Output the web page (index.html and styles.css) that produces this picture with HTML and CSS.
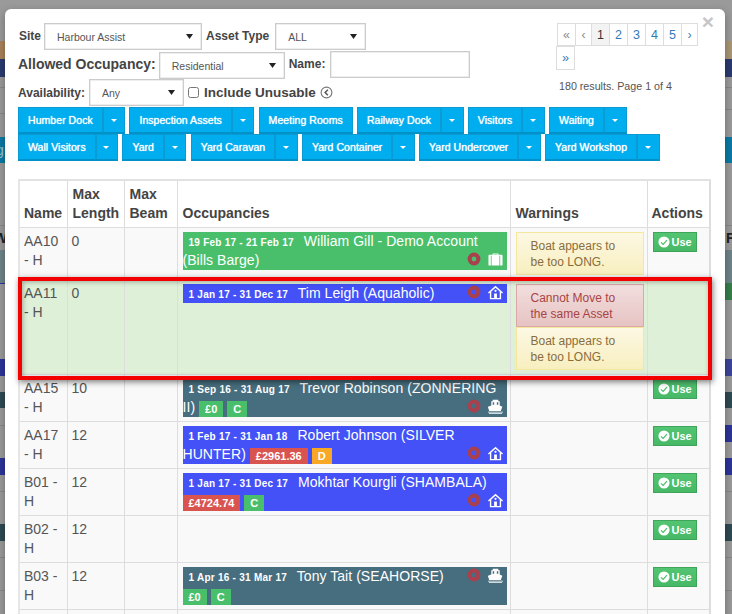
FILE: index.html
```html
<!DOCTYPE html>
<html lang="en">
<head>
<meta charset="utf-8">
<title>Move Asset</title>
<link rel="stylesheet" href="styles.css">
</head>
<body>
<svg class="defs" width="0" height="0" aria-hidden="true">
  <symbol id="i-ring" viewBox="0 0 14 14"><circle cx="7" cy="7" r="4.400" fill="none" stroke="#a8404e" stroke-width="4"/></symbol>
  <symbol id="i-case" viewBox="0 0 16 16"><path fill="#fff" d="M5 3V1.500h6V3h3.500c.6 0 1 .4 1 1v9.500c0 .6-.4 1-1 1h-13c-.6 0-1-.4-1-1V4c0-.6.4-1 1-1zM6.200 3h3.600V2.500H6.200zM3 4v10.500h.8V4zM12.200 4v10.500h.8V4z" fill-rule="evenodd"/></symbol>
  <symbol id="i-house" viewBox="0 0 16 16"><path fill="#fff" fill-rule="evenodd" d="M8 .8 16 8l-.9 1L14 8v7.200H2V8L.9 9 0 8zM8 2.800 3.500 7v6.800h3V9h3v4.800h3V7zM8 5a1.200 1.200 0 1 1 0 2.400A1.200 1.200 0 0 1 8 5z"/></symbol>
  <symbol id="i-boat" viewBox="0 0 16 16"><path fill="#fff" fill-rule="evenodd" d="M5 .8h6v1.500h1.500V7l2.800 1.300-1.700 4.500H1.400L-.3 8.300 3.500 7V2.300H5zM5 3.500v2.700h1.600V3.500zm4.400 0v2.700H11V3.500z"/><path fill="#fff" d="M0 13.500h16v1H0zM1 15.200h14v.8H1z"/></symbol>
  <symbol id="i-check" viewBox="0 0 14 14"><path fill="#fff" fill-rule="evenodd" d="M7 .5a6.500 6.500 0 1 1 0 13 6.500 6.500 0 0 1 0-13zM3.700 7 3 7.900l3 2.800 5-5.400-1-.9-4 4.300z"/></symbol>
  <symbol id="i-back" viewBox="0 0 14 14"><circle cx="7" cy="7" r="5.800" fill="none" stroke="#777" stroke-width="1.200"/><path fill="none" stroke="#555" stroke-width="1.600" d="M8.500 4 5.500 7l3 3"/></symbol>
</svg>
<div class="screen">
  <div class="backdrop">
    <div class="strip strip-left"><span class="bg-text bt-g">g</span><span class="bg-text bt-w">W</span></div>
    <div class="strip strip-right"><span class="bg-text bt-fr">Fr</span></div>
  </div>
  <div class="modal">
    <span class="close">×</span>
    <div class="top">
      <div class="filters">
        <div class="frow frow-1">
          <label class="lbl">Site</label>
          <select class="sel sel-site"><option>Harbour Assist</option></select>
          <label class="lbl">Asset Type</label>
          <select class="sel sel-type"><option>ALL</option></select>
        </div>
        <div class="frow frow-2">
          <label class="lbl lbl-big">Allowed Occupancy:</label>
          <select class="sel sel-occ"><option>Residential</option></select>
          <label class="lbl">Name:</label>
          <input class="name-input" type="text">
        </div>
        <div class="frow frow-3">
          <label class="lbl lbl-avail">Availability:</label>
          <select class="sel sel-avail"><option>Any</option></select>
          <input class="chk" type="checkbox">
          <label class="lbl lbl-unusable">Include Unusable</label>
          <svg class="ico-back"><use href="#i-back"/></svg>
        </div>
      </div>
      <div class="pager-box">
        <ul class="pager">
          <li class="muted">«</li><li class="muted sm">‹</li><li class="active">1</li><li>2</li><li>3</li><li>4</li><li>5</li><li class="sm">›</li>
          <li class="wrap-last">»</li>
        </ul>
        <p class="results">180 results. Page 1 of 4</p>
      </div>
    </div>
    <div class="btn-row">
      <div class="split"><span class="b">Humber Dock</span><span class="c"></span></div>
      <div class="split"><span class="b">Inspection Assets</span><span class="c"></span></div>
      <div class="split"><span class="b">Meeting Rooms</span></div>
      <div class="split"><span class="b">Railway Dock</span><span class="c"></span></div>
      <div class="split"><span class="b">Visitors</span><span class="c"></span></div>
      <div class="split"><span class="b">Waiting</span><span class="c"></span></div>
    </div>
    <div class="btn-row">
      <div class="split"><span class="b">Wall Visitors</span><span class="c"></span></div>
      <div class="split"><span class="b">Yard</span><span class="c"></span></div>
      <div class="split"><span class="b">Yard Caravan</span><span class="c"></span></div>
      <div class="split"><span class="b">Yard Container</span><span class="c"></span></div>
      <div class="split"><span class="b">Yard Undercover</span><span class="c"></span></div>
      <div class="split"><span class="b">Yard Workshop</span><span class="c"></span></div>
    </div>
    <div class="table-wrap">
      <table class="assets">
        <colgroup><col class="c1"><col class="c2"><col class="c3"><col class="c4"><col class="c5"><col class="c6"></colgroup>
        <thead>
          <tr><th>Name</th><th class="th-in">Max Length</th><th class="th-in">Max Beam</th><th class="th-in">Occupancies</th><th class="th-in">Warnings</th><th>Actions</th></tr>
        </thead>
        <tbody>
          <tr>
            <td>AA10 - H</td><td>0</td><td></td>
            <td><div class="occ green"><span class="date">19 Feb 17 - 21 Feb 17</span> William Gill - Demo Account <span class="occ-icons"><svg class="ring"><use href="#i-ring"/></svg><svg class="kind"><use href="#i-case"/></svg></span>(Bills Barge)</div></td>
            <td><div class="alert warn">Boat appears to be too LONG.</div></td>
            <td><span class="use"><svg><use href="#i-check"/></svg>Use</span></td>
          </tr>
          <tr class="picked">
            <td>AA11 - H</td><td>0</td><td></td>
            <td><div class="occ blue"><span class="date">1 Jan 17 - 31 Dec 17</span> Tim Leigh (Aquaholic) <span class="occ-icons"><svg class="ring"><use href="#i-ring"/></svg><svg class="kind"><use href="#i-house"/></svg></span></div></td>
            <td><div class="alert danger">Cannot Move to the same Asset</div><div class="alert warn">Boat appears to be too LONG.</div></td>
            <td></td>
          </tr>
          <tr>
            <td>AA15 - H</td><td>10</td><td></td>
            <td><div class="occ teal"><span class="date">1 Sep 16 - 31 Aug 17</span> Trevor Robinson (ZONNERING II) <span class="occ-icons"><svg class="ring"><use href="#i-ring"/></svg><svg class="kind"><use href="#i-boat"/></svg></span><span class="tag t-green">£0</span> <span class="tag t-green">C</span></div></td>
            <td></td>
            <td><span class="use"><svg><use href="#i-check"/></svg>Use</span></td>
          </tr>
          <tr>
            <td>AA17 - H</td><td>12</td><td></td>
            <td><div class="occ blue"><span class="date">1 Feb 17 - 31 Jan 18</span> Robert Johnson (SILVER HUNTER) <span class="occ-icons"><svg class="ring"><use href="#i-ring"/></svg><svg class="kind"><use href="#i-house"/></svg></span><span class="tag t-red">£2961.36</span> <span class="tag t-orange">D</span></div></td>
            <td></td>
            <td><span class="use"><svg><use href="#i-check"/></svg>Use</span></td>
          </tr>
          <tr>
            <td>B01 - H</td><td>12</td><td></td>
            <td><div class="occ blue"><span class="date">1 Jan 17 - 31 Dec 17</span> Mokhtar Kourgli (SHAMBALA) <span class="occ-icons"><svg class="ring"><use href="#i-ring"/></svg><svg class="kind"><use href="#i-house"/></svg></span><span class="tag t-red">£4724.74</span> <span class="tag t-green">C</span></div></td>
            <td></td>
            <td><span class="use"><svg><use href="#i-check"/></svg>Use</span></td>
          </tr>
          <tr>
            <td>B02 - H</td><td>12</td><td></td><td></td><td></td>
            <td><span class="use"><svg><use href="#i-check"/></svg>Use</span></td>
          </tr>
          <tr>
            <td>B03 - H</td><td>12</td><td></td>
            <td><div class="occ teal"><span class="date">1 Apr 16 - 31 Mar 17</span> Tony Tait (SEAHORSE) <span class="occ-icons"><svg class="ring"><use href="#i-ring"/></svg><svg class="kind"><use href="#i-boat"/></svg></span><span class="tag t-green">£0</span> <span class="tag t-green">C</span></div></td>
            <td></td>
            <td><span class="use"><svg><use href="#i-check"/></svg>Use</span></td>
          </tr>
          <tr><td></td><td></td><td></td><td></td><td></td><td></td></tr>
        </tbody>
      </table>
    </div>
    <div class="red-box"></div>
  </div>
</div>
</body>
</html>
```
FILE: styles.css
```css
* { box-sizing: border-box; }
html, body { margin: 0; height: 100%; overflow: hidden; background: #9a9a9a; }
body { font-family: "Liberation Sans", Arial, sans-serif; font-size: 14px; color: #555; }
.defs { position: absolute; }
.screen { position: relative; width: 732px; height: 614px; overflow: hidden; }

.backdrop { position: absolute; inset: 0; display: flex; justify-content: space-between; }
.strip { position: relative; height: 614px; overflow: hidden; }
.strip-left {
  width: 5px;
  background: linear-gradient(to bottom,
    #9a9a9a 41px, #a9825a 41px, #a9825a 59px, #2a3a6e 59px, #2a3a6e 77px, #9a9a9a 77px,
    #9a9a9a 87px, #888 87px, #888 88px, #9a9a9a 88px, #9a9a9a 113px, #888 113px, #888 114px, #9a9a9a 114px,
    #9a9a9a 137px, #0a7aa5 137px, #0a7aa5 163px, #9a9a9a 163px,
    #9a9a9a 225px, #888 225px, #888 226px, #9a9a9a 226px,
    #9a9a9a 250px, #6d8488 250px, #6d8488 283px, #2c34a8 283px, #2c34a8 284px, #9a9a9a 284px,
    #9a9a9a 359px, #2c3498 359px, #2c3498 376px, #9a9a9a 376px,
    #9a9a9a 392px, #2e4a52 392px, #2e4a52 408px, #9a9a9a 408px,
    #9a9a9a 425px, #888 425px, #888 426px, #9a9a9a 426px,
    #9a9a9a 458px, #2c3498 458px, #2c3498 475px, #9a9a9a 475px,
    #9a9a9a 491px, #888 491px, #888 492px, #9a9a9a 492px,
    #9a9a9a 524px, #2e4a52 524px, #2e4a52 541px, #9a9a9a 541px,
    #9a9a9a 557px, #888 557px, #888 558px, #9a9a9a 558px,
    #9a9a9a 590px, #888 590px, #888 591px, #9a9a9a 591px);
}
.strip-right {
  width: 7px;
  background: linear-gradient(to bottom,
    #9a9a9a 41px, #a89673 41px, #a89673 59px, #2a3a6e 59px, #2a3a6e 77px, #9a9a9a 77px,
    #9a9a9a 87px, #888 87px, #888 88px, #9a9a9a 88px, #9a9a9a 109px, #888 109px, #888 110px, #9a9a9a 110px,
    #9a9a9a 137px, #0a7aa5 137px, #0a7aa5 163px, #9a9a9a 163px,
    #9a9a9a 225px, #888 225px, #888 226px, #9a9a9a 226px,
    #9a9a9a 250px, #6d8488 250px, #6d8488 283px, #357e4a 283px, #357e4a 300px, #9a9a9a 300px,
    #9a9a9a 359px, #3c4498 359px, #3c4498 376px, #9a9a9a 376px,
    #9a9a9a 392px, #2e4a52 392px, #2e4a52 408px, #9a9a9a 408px,
    #9a9a9a 425px, #2c3498 425px, #2c3498 442px, #9a9a9a 442px,
    #9a9a9a 458px, #2c3498 458px, #2c3498 475px, #9a9a9a 475px,
    #9a9a9a 491px, #888 491px, #888 492px, #9a9a9a 492px,
    #9a9a9a 524px, #2e4a52 524px, #2e4a52 541px, #9a9a9a 541px,
    #9a9a9a 557px, #888 557px, #888 558px, #9a9a9a 558px,
    #9a9a9a 590px, #888 590px, #888 591px, #9a9a9a 591px);
}
.bg-text { position: absolute; font-size: 14px; line-height: 16px; color: #222; font-weight: bold; }
.bt-g { left: -4px; top: 142px; color: #9cc; font-weight: normal; }
.bt-w { left: -6px; top: 230px; }
.bt-fr { left: 1px; top: 230px; }

.modal {
  position: absolute; left: 5px; top: 9px; width: 720px; height: 640px;
  background: #fff; border-radius: 6px 6px 0 0;
  padding: 14px 14px 0 13px;
  box-shadow: 0 3px 9px rgba(0,0,0,.3);
}
.close {
  position: absolute; right: 11px; top: 2px;
  font-size: 21px; line-height: 21px; font-weight: bold; color: #c6c6c6;
}

.top { display: flex; justify-content: space-between; height: 84px; }
.filters { width: 530px; }
.frow { display: flex; align-items: center; height: 27px; }
.frow-1 { height: 29px; align-items: flex-start; }
.frow-1 .lbl { line-height: 26px; }
.lbl { font-size: 12px; font-weight: bold; color: #444; white-space: nowrap; }
.frow-1 .lbl:first-child { margin-left: 1px; margin-right: 3px; }
.frow-1 .sel-site { margin-right: 4px; }
.frow-1 .sel-type { margin-left: 6px; }
.frow-2 .lbl { margin-top: -3px; }
.lbl-big { font-size: 14px; margin-right: 3px; }
.frow-2 .sel-occ { margin-right: 4px; }
.frow-2 .name-input { margin: -2px 0 0 5px; }
.lbl-avail { margin-right: 4px; }

.sel {
  appearance: none; -webkit-appearance: none;
  height: 27px; padding: 0 0 0 12px; margin: 0;
  font: 10.500px "Liberation Sans", Arial, sans-serif; color: #555;
  background: #fff url("data:image/svg+xml,%3Csvg xmlns='http://www.w3.org/2000/svg' width='7' height='5'%3E%3Cpath d='M0 0h7L3.500 5z' fill='%23222'/%3E%3C/svg%3E") no-repeat right 8px center;
  border: 1px solid #ccc; border-radius: 0;
  box-shadow: 0 0 0 .5px #ddd inset;
}
.sel-site { width: 158px; }
.sel-type { width: 91px; }
.sel-occ { width: 126px; }
.sel-avail { width: 95px; }
.name-input { width: 140px; height: 27px; border: 1px solid #ccc; box-shadow: 0 0 0 .5px #ddd inset; }
.chk { width: 11px; height: 11px; margin: 0 5px 0 4px; }
.lbl-unusable { font-size: 13.500px; }
.ico-back { width: 13px; height: 13px; margin-left: 4px; }

.pager-box { width: 150px; margin-right: 5px; }
.pager { display: flex; flex-wrap: wrap; margin: 0; padding: 0; list-style: none; width: 145px; }
.pager li {
  width: 19px; height: 23px;
  border: 1px solid #ddd; margin-left: -1px;
  display: flex; align-items: center; justify-content: center;
  font-size: 12.500px; color: #337ab7;
}
.pager li:first-child { margin-left: 1px; }
.pager .sm { width: 17px; }
.pager .muted { color: #888; }
.pager .active { background: #f3f3f3; color: #333; }
.pager .wrap-last { width: 19px; height: 24px; margin-left: 0; }
.results { margin: 8px 0 0 3px; font-size: 10.700px; line-height: 16px; color: #555; }

.btn-row { display: flex; height: 27px; }
.split { display: flex; margin-right: 4.200px; }
.split .b, .split .c {
  background: #00adee; border: 1px solid #0a9ad4; border-bottom: 2px solid #0091c9;
  color: #fff; height: 27px; font-size: 10.600px; line-height: 24px; font-weight: normal;
  text-shadow: 0 0 1px #fff; white-space: nowrap;
}
.split .b { padding: 0 9px; }
.split .c { width: 22.500px; border-left: 0; display: flex; align-items: center; justify-content: center; box-shadow: inset 1px 0 0 #0a9ad4; }
.split .c::after { content: ""; border: 3px solid transparent; border-top: 3px solid #fff; border-bottom: 0; }

.table-wrap {
  margin-top: 18px; width: 693px;
  border-top: 2px solid #e2e2e2; border-left: 2px solid #e6e6e6; border-right: 1px solid #ddd; padding-right: 1px;
}
.assets { border-collapse: collapse; table-layout: fixed; width: 689px; background: #f9f9f9; }
.c1 { width: 47px; } .c2 { width: 57px; } .c3 { width: 53px; } .c4 { width: 333px; } .c5 { width: 137px; } .c6 { width: 62px; }
.assets th, .assets td {
  border: 1px solid #ddd; padding: 4px; line-height: 19px; font-size: 14px; vertical-align: top; text-align: left;
}
.assets tr:first-child th, .assets tbody tr:first-child td { border-top: 0; }
.assets th:first-child, .assets td:first-child { border-left: 0; }
.assets th { background: #fff; color: #444; font-weight: bold; vertical-align: bottom; border-bottom: 1px solid #ddd; height: 46px; }
.assets .th-in { padding-left: 5px; padding-right: 3px; }
.assets .picked td { background: #dff0d8; }

.occ { color: #fff; font-size: 14px; line-height: 19px; overflow: hidden; letter-spacing: .05px; margin: 0 -1px 0 1px; }
.occ.green { background: #4abf6b; }
.occ.blue { background: #4351f6; }
.occ.teal { background: #476e7e; }
.date { font-size: 10px; line-height: 1; font-weight: bold; padding: 0 6px; letter-spacing: .25px; }
.occ-icons { float: right; display: flex; height: 19px; padding-right: 4px; align-items: flex-start; }
.ring { width: 14px; height: 14px; margin: 1px 7px 0 0; }
.kind { width: 15px; height: 15px; margin-top: 1px; }
.tag { display: inline-block; height: 16px; line-height: 16px; padding: 0 6px; font-size: 11px; font-weight: bold; vertical-align: bottom; letter-spacing: 0; color: #fff; }
.t-green { background: #4abf6b; }
.t-red { background: #d9534f; }
.t-orange { background: #f9a825; }

.alert {
  height: 43px; padding: 5px 14px; font-size: 12px; line-height: 16px; border: 1px solid; margin: 0 -1px 0 1px;
}
.warn { color: #8a6d3b; border-color: #f5e79e; background: linear-gradient(#fcf8e3, #f8efc0); }
.danger { color: #a94442; border-color: #dca7a7; background: linear-gradient(#f2dede, #e7c3c3); }

.use {
  display: inline-flex; align-items: center; height: 20px; width: 44px; padding-left: 4px; margin-left: 1px;
  background: linear-gradient(#52c472, #46b866); border: 1px solid #3fa55a; color: #fff;
  font-size: 11px; font-weight: bold; line-height: 18px; vertical-align: top;
}
.use svg { width: 12px; height: 12px; margin-right: 2px; }

.red-box {
  position: absolute; left: 13px; top: 268px; width: 694px; height: 103px;
  border: 4px solid #f30000; pointer-events: none;
  box-shadow: 1px 2px 6px rgba(0,0,0,.5), inset 1px 1px 5px rgba(0,0,0,.3);
}
```
